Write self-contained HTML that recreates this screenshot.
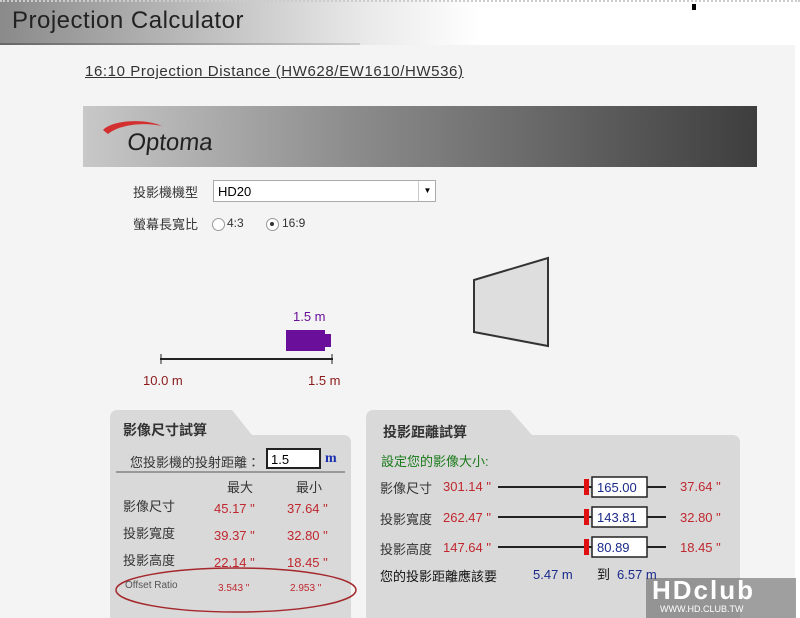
<!DOCTYPE html>
<html><head><meta charset="utf-8"><style>
body{margin:0;width:800px;height:618px;overflow:hidden;background:#f4f4f4;font-family:"Liberation Sans","Noto Sans CJK TC",sans-serif;position:relative}
.a{position:absolute;white-space:nowrap}
.r{color:#c0282f;font-size:13px}
.k{color:#333;font-size:13px}
</style></head><body>
<div class="a" style="left:0;top:0;width:800px;height:45px;background:linear-gradient(90deg,#8a8a8a 0%,#bdbdbd 25%,#e8e8e8 45%,#fff 60%,#fff 100%);border-top:2px dotted #ccc;box-sizing:border-box"></div>
<div class="a" style="left:0;top:43px;width:360px;height:2px;background:linear-gradient(90deg,#666,#ccc)"></div>
<div class="a" style="left:12px;top:7px;font-size:24px;color:#222;letter-spacing:0.5px">Projection Calculator</div>
<div class="a" style="left:692px;top:4px;width:4px;height:6px;background:#000"></div>
<div class="a" style="left:795px;top:45px;width:5px;height:573px;background:#fff"></div>
<div class="a" style="left:85px;top:63px;font-size:15px;color:#333;text-decoration:underline;letter-spacing:0.6px">16:10 Projection Distance (HW628/EW1610/HW536)</div>
<div class="a" style="left:83px;top:106px;width:674px;height:61px;background:linear-gradient(90deg,#c8c8c8,#8c8c8c 40%,#3e3e3e)"></div>
<svg class="a" style="left:100px;top:118px" width="130" height="40"><path d="M3,12 C12,2 45,0 62,8 C45,4 20,6 8,16 Z" fill="#d32f2f"/><text x="30" y="32" font-family="Liberation Sans" font-size="24" fill="#222" transform="skewX(-6)">Optoma</text></svg>
<div class="a k" style="left:133px;top:182px">投影機機型</div>
<div class="a" style="left:213px;top:180px;width:223px;height:22px;background:#fff;border:1px solid #aaa;box-sizing:border-box;font-size:13px;padding:3px 4px">HD20</div>
<div class="a" style="left:418px;top:181px;width:17px;height:20px;border-left:1px solid #ccc;font-size:8px;text-align:center;line-height:20px">▼</div>
<div class="a k" style="left:133px;top:214px">螢幕長寬比</div>
<div class="a" style="left:212px;top:218px;width:11px;height:11px;border:1px solid #999;border-radius:50%;background:#fff"></div>
<div class="a k" style="left:227px;top:216px;font-size:12px">4:3</div>
<div class="a" style="left:266px;top:218px;width:11px;height:11px;border:1px solid #999;border-radius:50%;background:#fff"></div>
<div class="a" style="left:270px;top:222px;width:4px;height:4px;border-radius:50%;background:#333"></div>
<div class="a k" style="left:282px;top:216px;font-size:12px">16:9</div>
<svg class="a" style="left:0;top:250px" width="800" height="140"><polygon points="474,30 548,8 548,96 474,82" fill="#dedede" stroke="#333" stroke-width="2"/><rect x="286" y="80" width="39" height="21" fill="#6a0f9a"/><rect x="324" y="84" width="7" height="13" fill="#6a0f9a"/><line x1="160" y1="109" x2="333" y2="109" stroke="#222" stroke-width="2"/><line x1="161" y1="104" x2="161" y2="114" stroke="#222"/><line x1="332" y1="104" x2="332" y2="114" stroke="#222"/></svg>
<div class="a" style="left:293px;top:309px;font-size:13px;color:#6a0f9a">1.5 m</div>
<div class="a" style="left:143px;top:373px;font-size:13px;color:#8b1a1a">10.0 m</div>
<div class="a" style="left:308px;top:373px;font-size:13px;color:#8b1a1a">1.5 m</div>
<svg class="a" style="left:0;top:400px" width="800" height="218"><path d="M110,18 Q110,10 118,10 L232,10 L252,35 L343,35 Q351,35 351,43 L351,218 L110,218 Z" fill="#d9d9d9"/><path d="M366,18 Q366,10 374,10 L510,10 L532,35 L732,35 Q740,35 740,43 L740,218 L366,218 Z" fill="#d9d9d9"/><line x1="116" y1="72" x2="345" y2="72" stroke="#999" stroke-width="2"/><ellipse cx="236" cy="190" rx="120" ry="22" fill="none" stroke="#a4282c" stroke-width="1.5"/>
<g stroke="#222" stroke-width="2"><line x1="498" y1="87" x2="592" y2="87"/><line x1="647" y1="87" x2="666" y2="87"/><line x1="498" y1="117" x2="592" y2="117"/><line x1="647" y1="117" x2="666" y2="117"/><line x1="498" y1="147" x2="592" y2="147"/><line x1="647" y1="147" x2="666" y2="147"/></g>
<g fill="#e01010"><rect x="584" y="79" width="5" height="16"/><rect x="584" y="109" width="5" height="16"/><rect x="584" y="139" width="5" height="16"/></g>
<g fill="#fff" stroke="#222" stroke-width="1.5"><rect x="592" y="77" width="55" height="20"/><rect x="592" y="107" width="55" height="20"/><rect x="592" y="137" width="55" height="20"/></g>
<rect x="646" y="178" width="150" height="40" fill="#666" opacity=".6"/></svg>
<div class="a" style="left:123px;top:420px;font-size:14px;font-weight:bold;color:#333">影像尺寸試算</div>
<div class="a" style="left:383px;top:422px;font-size:14px;font-weight:bold;color:#333">投影距離試算</div>
<div class="a k" style="left:130px;top:452px">您投影機的投射距離：</div>
<div class="a" style="left:266px;top:448px;width:55px;height:21px;background:#fff;border:2px solid #222;box-sizing:border-box;font-size:13px;padding:2px 3px">1.5</div>
<div class="a" style="left:325px;top:451px;font-size:14px;font-weight:bold;color:#1a2fb0;font-family:'Liberation Serif',serif">m</div>
<div class="a k" style="left:227px;top:477px">最大</div><div class="a k" style="left:296px;top:477px">最小</div>
<div class="a k" style="left:123px;top:496px">影像尺寸</div><div class="a r" style="left:214px;top:501px">45.17 "</div><div class="a r" style="left:287px;top:501px">37.64 "</div>
<div class="a k" style="left:123px;top:523px">投影寬度</div><div class="a r" style="left:214px;top:528px">39.37 "</div><div class="a r" style="left:287px;top:528px">32.80 "</div>
<div class="a k" style="left:123px;top:550px">投影高度</div><div class="a r" style="left:214px;top:555px">22.14 "</div><div class="a r" style="left:287px;top:555px">18.45 "</div>
<div class="a" style="left:125px;top:580px;font-size:10px;color:#555">Offset Ratio</div><div class="a r" style="left:218px;top:583px;font-size:10px">3.543 "</div><div class="a r" style="left:290px;top:583px;font-size:10px">2.953 "</div>
<div class="a" style="left:381px;top:451px;font-size:13px;color:#1a7a1a">設定您的影像大小:</div>
<div class="a k" style="left:380px;top:478px">影像尺寸</div><div class="a r" style="left:443px;top:479px">301.14 "</div><div class="a" style="left:597px;top:480px;font-size:13px;color:#1a2a8a">165.00</div><div class="a r" style="left:680px;top:479px">37.64 "</div>
<div class="a k" style="left:380px;top:509px">投影寬度</div><div class="a r" style="left:443px;top:510px">262.47 "</div><div class="a" style="left:597px;top:510px;font-size:13px;color:#1a2a8a">143.81</div><div class="a r" style="left:680px;top:510px">32.80 "</div>
<div class="a k" style="left:380px;top:539px">投影高度</div><div class="a r" style="left:443px;top:540px">147.64 "</div><div class="a" style="left:597px;top:540px;font-size:13px;color:#1a2a8a">80.89</div><div class="a r" style="left:680px;top:540px">18.45 "</div>
<div class="a" style="left:380px;top:566px;font-size:13px;color:#111">您的投影距離應該要</div>
<div class="a" style="left:533px;top:567px;font-size:13px;color:#1a2a8a">5.47 m</div>
<div class="a" style="left:597px;top:564px;font-size:13px;color:#111">到</div>
<div class="a" style="left:617px;top:567px;font-size:13px;color:#1a2a8a">6.57 m</div>
<div class="a" style="left:652px;top:575px;font-size:26px;font-weight:bold;color:#fff;letter-spacing:2px">HDclub</div>
<div class="a" style="left:660px;top:604px;font-size:9px;color:#fff">WWW.HD.CLUB.TW</div>
</body></html>
